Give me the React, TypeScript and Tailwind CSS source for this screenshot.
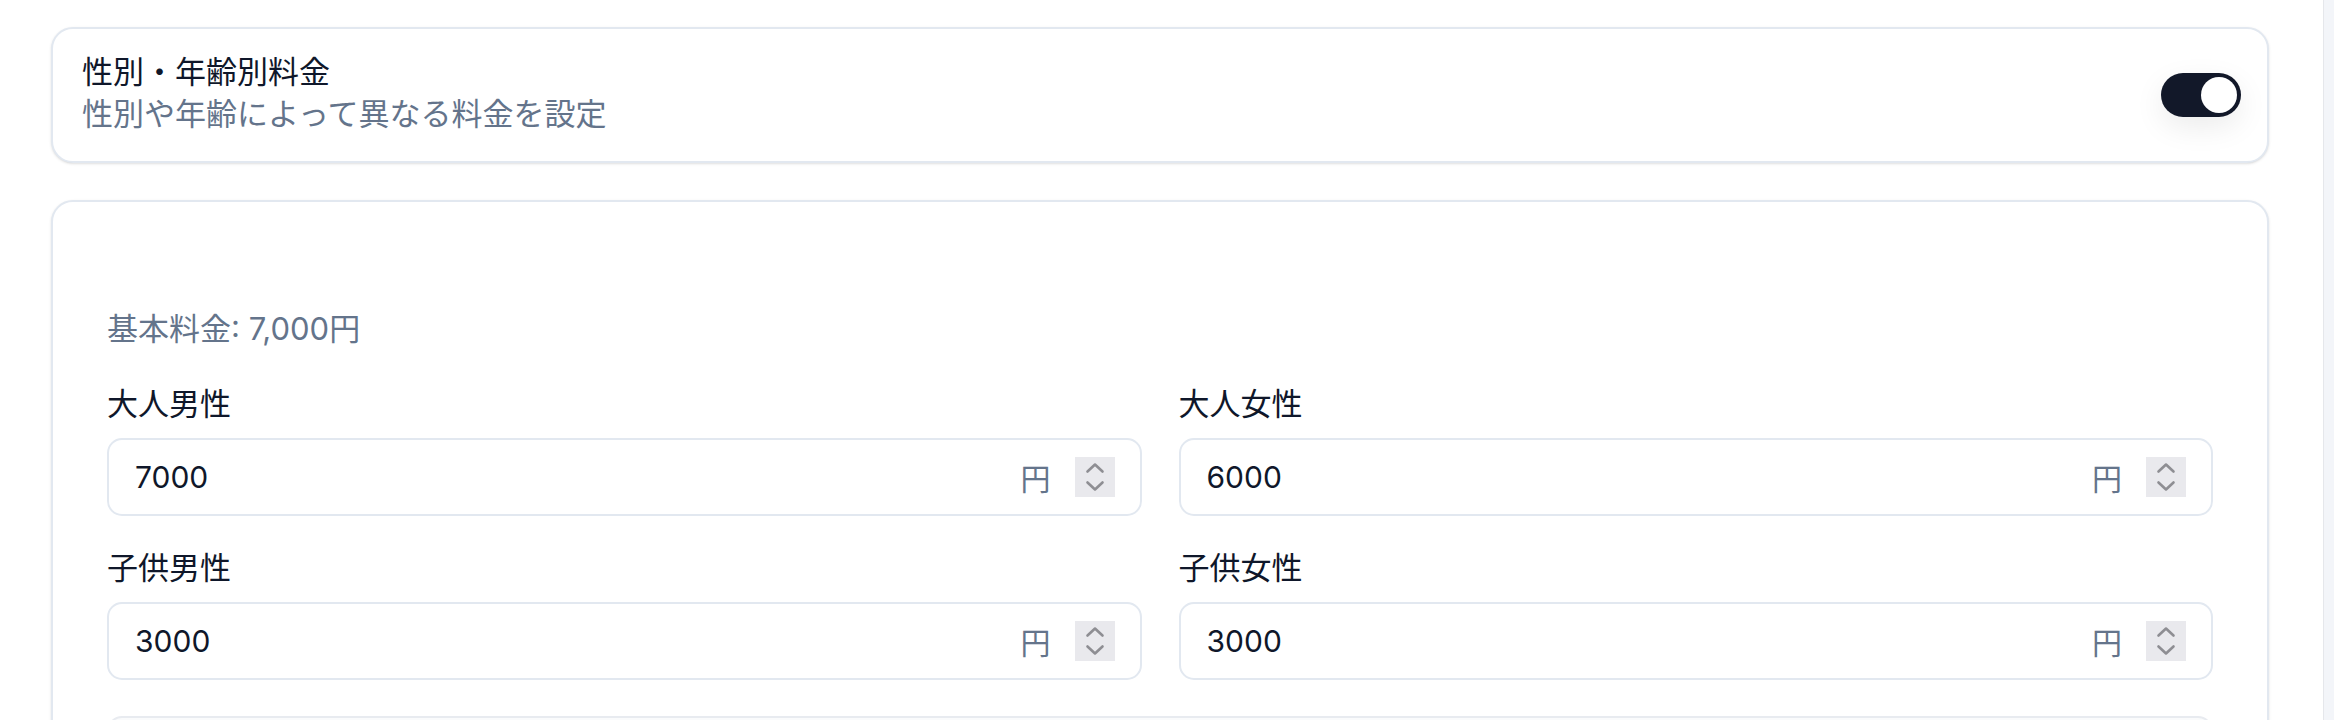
import { useState } from "react";

const FONT = { fontFamily: '"Inter", "Noto Sans CJK JP", sans-serif' };
const JP = { fontFamily: '"Noto Sans CJK JP", "Inter", sans-serif' };

type Field = { label: string; value: string };

const fields: Field[] = [
  { label: "大人男性", value: "7000" },
  { label: "大人女性", value: "6000" },
  { label: "子供男性", value: "3000" },
  { label: "子供女性", value: "3000" },
];

function Stepper() {
  return (
    <div className="flex h-[40px] w-[40px] shrink-0 items-center justify-center bg-[#e9e9ed]">
      <svg width="40" height="40" viewBox="0 0 40 40" fill="none" stroke="#8e8e93" strokeWidth="2.6" strokeLinecap="round" strokeLinejoin="round">
        <path d="M12.5 14.5 L20 7.5 L27.5 14.5" />
        <path d="M12.5 25.5 L20 32.5 L27.5 25.5" />
      </svg>
    </div>
  );
}

function PriceInput({ label, value }: Field) {
  const [v, setV] = useState(value);
  return (
    <div className="flex flex-col gap-[14px]">
      <label className="text-[31px] leading-[44px] text-[#0f172a]" style={JP}>
        {label}
      </label>
      <div className="flex h-[78px] items-center rounded-[15px] border-2 border-[#e2e8f0] bg-white pl-[26px] pr-[25px]">
        <input
          value={v}
          onChange={(e) => setV(e.target.value)}
          className="min-w-0 flex-1 bg-transparent text-[30px] text-[#0f172a] outline-none"
          style={FONT}
        />
        <span className="text-[30px] text-[#64748b]" style={JP}>
          円
        </span>
        <div className="ml-[24px]">
          <Stepper />
        </div>
      </div>
    </div>
  );
}

export default function App() {
  const [on, setOn] = useState(true);

  return (
    <div className="flex h-[720px] w-full overflow-hidden bg-white" style={FONT}>
      <main className="flex flex-1 flex-col gap-[37px] pl-[51px] pr-[54px] pt-[27px]">
        {/* gender / age toggle */}
        <section className="flex h-[136px] shrink-0 items-center justify-between rounded-[22px] border-2 border-[#e2e8f0] bg-white pl-[29px] pr-[26px] shadow-sm">
          <div className="-mt-[9px] flex flex-col" style={JP}>
            <h3 className="text-[31px] leading-[42px] text-[#0f172a]">性別・年齢別料金</h3>
            <p className="text-[31px] leading-[42px] text-[#64748b]">性別や年齢によって異なる料金を設定</p>
          </div>
          <button
            onClick={() => setOn(!on)}
            className={`flex h-[44px] w-[80px] items-center rounded-full p-[4px] shadow-[0_10px_30px_rgba(0,0,0,0.08)] ${
              on ? "justify-end bg-[#121829]" : "justify-start bg-[#e2e8f0]"
            }`}
          >
            <span className="h-[36px] w-[36px] rounded-full bg-white" />
          </button>
        </section>

        {/* price table */}
        <section className="flex shrink-0 flex-col rounded-[22px] border-2 border-[#e2e8f0] bg-white px-[54px] pb-[40px] pt-[103px] shadow-sm">
          <p className="text-[31px] leading-[44px] text-[#64748b]">
            <span style={JP}>基本料金</span>: 7,000<span style={JP}>円</span>
          </p>
          <div className="mt-[29px] grid grid-cols-2 gap-x-[37px] gap-y-[28px]">
            {fields.map((f) => (
              <PriceInput key={f.label} {...f} />
            ))}
          </div>
          <div className="mt-[36px] h-[160px] rounded-[15px] border-2 border-[#e8ebf0] bg-[#fafbfc]" />
        </section>
      </main>
      <div className="w-[11px] shrink-0 border-l border-[#e5e7eb] bg-[#f3f5f9]" />
    </div>
  );
}
